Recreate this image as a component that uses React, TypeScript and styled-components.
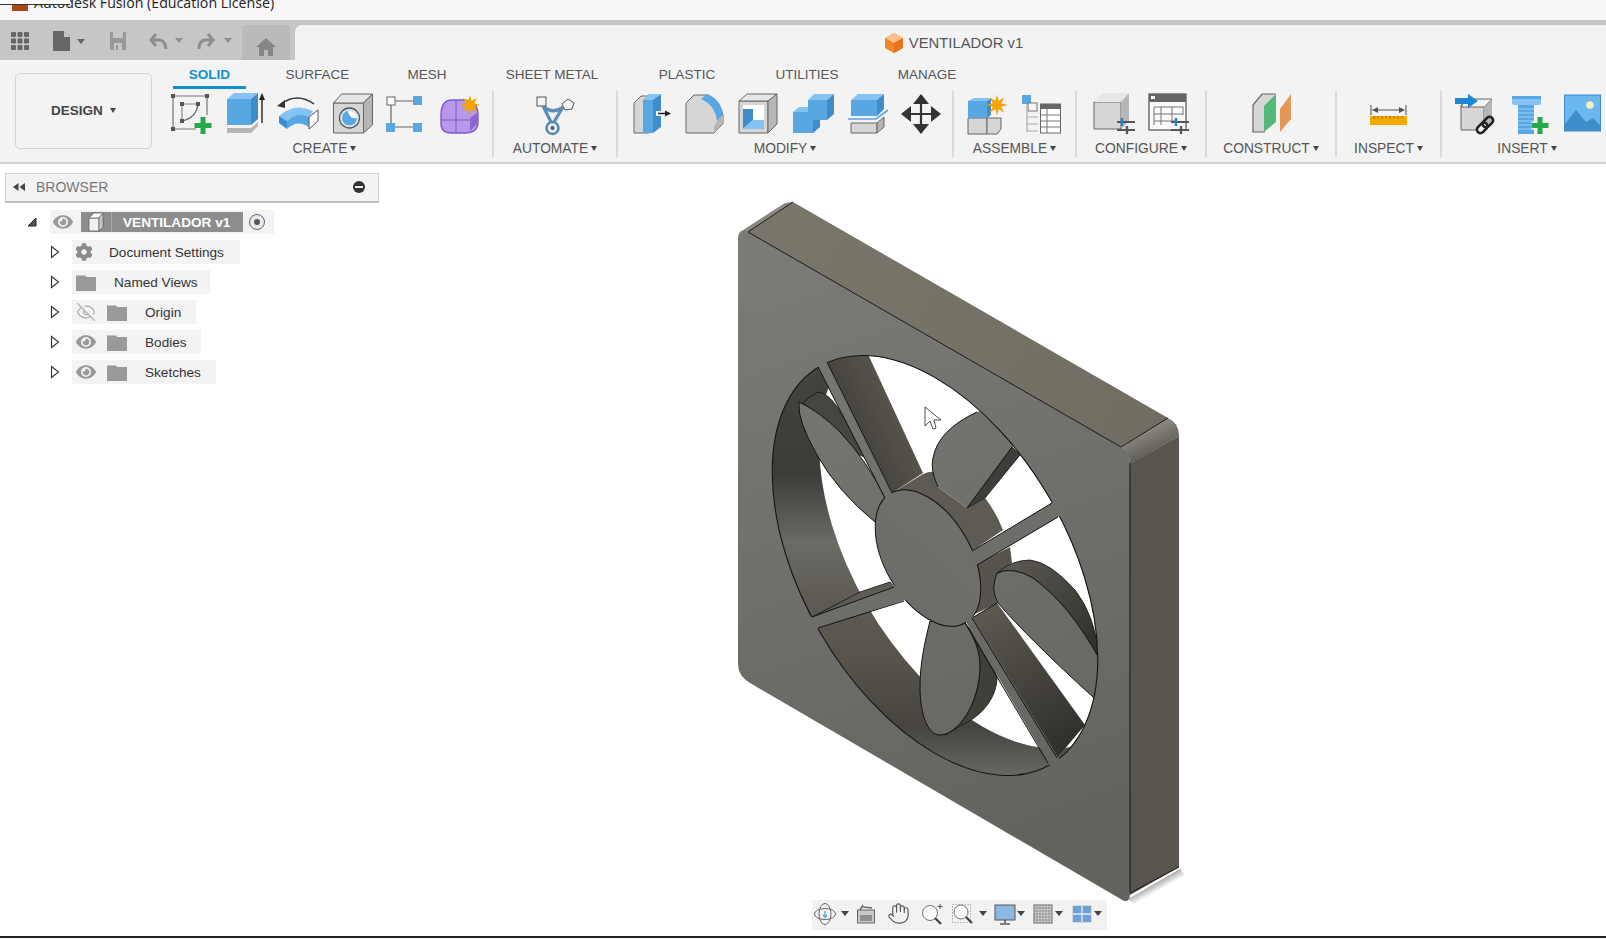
import * as React from "react";
import styled, { createGlobalStyle } from "styled-components";
import { Hand, EyeOff } from "lucide-react";
import { FaCog, FaEye } from "react-icons/fa";

const LIGHT = "#86c3f2";
const BLUE = "#59a7e2";
const DEEP = "#3f8ccb";
const G1 = "#e6e6e6";
const G2 = "#d6d6d6";
const G3 = "#b6b6b6";
const LINE = "#666";

const starPoints = (cx: number, cy: number, r1: number, r2: number, n: number): string => {
  const pts: string[] = [];
  for (let i = 0; i < n * 2; i++) {
    const r = i % 2 ? r2 : r1;
    const a = (Math.PI * i) / n - Math.PI / 2;
    pts.push(`${(cx + r * Math.cos(a)).toFixed(1)},${(cy + r * Math.sin(a)).toFixed(1)}`);
  }
  return pts.join(" ");
};

const Tool: React.FC<{ children: React.ReactNode; dx?: number }> = ({ children, dx = 0 }) => (
  <ToolSvg viewBox="0 0 46 46" fill="none">
    <g transform={`translate(${dx} 0)`}>{children}</g>
  </ToolSvg>
);

const SketchIcon = () => (
  <Tool>
    <path d="M6 5H40M6 5V38M6 38H29M40 5V24" stroke="#777" strokeWidth="1.2" />
    <path d="M15 13H31M15 13V30" stroke="#888" strokeWidth="1.2" />
    <path d="M31 13C30 22 24 28 15 30" stroke="#555" strokeWidth="1.2" />
    {[[6, 5], [40, 5], [6, 38], [15, 13], [31, 13], [15, 30]].map(([x, y]) => (
      <rect key={`${x}-${y}`} x={x - 2} y={y - 2} width="4" height="4" fill="#555" />
    ))}
    <path d="M36 26V43M27.500 34.500H44.500" stroke="#25a84a" strokeWidth="5" />
  </Tool>
);

const ExtrudeIcon = () => (
  <Tool>
    <polygon points="6,8 30,8 30,34 6,34" fill={BLUE} />
    <polygon points="6,8 13,2 37,2 30,8" fill={LIGHT} />
    <polygon points="30,8 37,2 37,28 30,34" fill={DEEP} />
    <polygon points="6,37 30,37 37,31 37,35 30,42 6,42" fill={G3} />
    <path d="M41 32V7" stroke="#222" strokeWidth="1.4" />
    <polygon points="41,2 38,9 44,9" fill="#222" />
  </Tool>
);

const SweepIcon = () => (
  <Tool>
    <path d="M6 13Q22 1 39 13" stroke="#333" strokeWidth="1.5" />
    <polygon points="2,15 10,9 10,17" fill="#333" />
    <path d="M4 25Q20 11 38 20L34 26Q22 20 12 30Z" fill={LIGHT} />
    <path d="M4 25L12 30V38L4 32Z" fill={DEEP} />
    <path d="M12 30Q22 20 34 26V36Q22 28 12 38Z" fill={BLUE} />
    <polygon points="34,26 43,19 43,30 34,38" fill="#fff" stroke="#555" />
  </Tool>
);

const HoleIcon = () => (
  <Tool dx={1.5}>
    <polygon points="3,12 33,12 33,42 3,42" fill={G2} stroke={LINE} />
    <polygon points="3,12 11,3 42,3 33,12" fill={G1} stroke={LINE} />
    <polygon points="33,12 42,3 42,34 33,42" fill={G3} stroke={LINE} />
    <circle cx="19" cy="27" r="10" fill="#dfe8ef" stroke="#555" strokeWidth="1.3" />
    <circle cx="19" cy="27" r="7.500" fill={BLUE} />
    <path d="M17 20A7.500 7.500 0 0 1 26.500 27Q20 29 17 20Z" fill="#fff" />
  </Tool>
);

const BoxNodesIcon = () => (
  <Tool dx={-1}>
    <path d="M13 10H32M9 14V32M13 36H32" stroke="#666" strokeWidth="1.2" />
    <rect x="5" y="6" width="8" height="8" fill="#fff" stroke="#666" />
    <rect x="31" y="5" width="9" height="9" fill={BLUE} />
    <rect x="4" y="32" width="9" height="9" fill={BLUE} />
    <rect x="31" y="32" width="9" height="9" fill={BLUE} />
  </Tool>
);

const FormIcon = () => (
  <Tool>
    <path d="M4 24Q4 9 15 9H28Q41 11 41 24V31Q41 42 28 42H14Q4 42 4 32Z" fill="#b898ec" stroke="#7c5bc2" strokeWidth="1.4" />
    <path d="M4 29H33M19 10V42" stroke="#7c5bc2" strokeWidth="1" />
    <polygon points="33,27 41,21 41,32 33,40" fill="#8a66cf" />
    <polygon points={starPoints(33, 14, 10, 4.5, 8)} fill="#f6a300" />
  </Tool>
);

const AutomateIcon = () => (
  <Tool dx={-2}>
    <path d="M13 15Q23 24 33 16M13 15L21 31M33 16L24 31" stroke="#5b8fb8" strokeWidth="3.2" />
    <rect x="7" y="6" width="9" height="9" fill="#f3f3f3" stroke="#555" />
    <polygon points="38,8 44,12 42,18 35,19 32,13" fill="#f3f3f3" stroke="#555" />
    <circle cx="22.500" cy="37" r="6" fill="#e6eef5" stroke="#4f86ad" strokeWidth="2.4" />
    <circle cx="22.500" cy="37" r="2" fill="#555" />
  </Tool>
);

const PressPullIcon = () => (
  <Tool>
    <path d="M6 42H5V12L12 5H20V42Z" fill={G2} stroke={LINE} />
    <polygon points="14,9 24,9 24,42 14,42" fill={BLUE} />
    <polygon points="14,9 20,3 32,3 24,9" fill={LIGHT} />
    <polygon points="24,9 32,3 32,36 24,42" fill={DEEP} />
    <rect x="27" y="20" width="9" height="5" fill="#f3f3f3" />
    <path d="M29 22.500H38" stroke="#222" strokeWidth="1.5" />
    <polygon points="42,22.500 36,19.500 36,25.500" fill="#222" />
  </Tool>
);

const FilletIcon = () => (
  <Tool dx={-2}>
    <path d="M5 42V12L13 4H28V10Q40 12 42 24V33L33 42Z" fill={G2} stroke={LINE} />
    <path d="M20 8L26 3Q40 8 42 24L36 30Q34 14 20 8Z" fill={BLUE} />
    <polygon points="36,30 42,24 42,33 33,42 33,36" fill={G3} />
  </Tool>
);

const ShellIcon = () => (
  <Tool dx={-2}>
    <polygon points="4,10 33,10 33,42 4,42" fill={G2} stroke={LINE} />
    <polygon points="4,10 12,3 42,3 33,10" fill={G1} stroke={LINE} />
    <polygon points="33,10 42,3 42,33 33,42" fill={G3} stroke={LINE} />
    <rect x="8" y="14" width="21" height="24" fill="#fff" />
    <polygon points="8,18 18,18 18,29 8,38" fill={DEEP} />
    <polygon points="18,29 29,29 29,38 8,38" fill={LIGHT} />
  </Tool>
);

const CombineIcon = () => (
  <Tool dx={-3}>
    <polygon points="20,9 39,9 39,29 20,29" fill={BLUE} />
    <polygon points="20,9 26,3 46,3 39,9" fill={LIGHT} />
    <polygon points="39,9 46,3 46,23 39,29" fill={DEEP} />
    <polygon points="5,21 25,21 25,42 5,42" fill={BLUE} />
    <polygon points="5,21 11,16 20,16 20,21" fill={LIGHT} />
    <polygon points="25,29 32,29 32,36 25,42" fill={DEEP} />
  </Tool>
);

const SplitIcon = () => (
  <Tool>
    <polygon points="6,9 32,9 32,25 6,25" fill={BLUE} />
    <polygon points="6,9 13,3 39,3 32,9" fill={LIGHT} />
    <polygon points="32,9 39,3 39,18 32,25" fill={DEEP} />
    <path d="M3 28H31L43 19" stroke={BLUE} strokeWidth="1.6" />
    <polygon points="6,32 32,32 32,42 6,42" fill={G2} stroke={LINE} />
    <polygon points="32,32 39,26 39,36 32,42" fill={G3} stroke={LINE} />
  </Tool>
);

const MoveIcon = () => (
  <Tool dx={-1}>
    <path d="M23 8V38M8 23H38" stroke="#333" strokeWidth="2.2" />
    <polygon points="23,3 15,13 31,13" fill="#333" />
    <polygon points="23,43 15,33 31,33" fill="#333" />
    <polygon points="3,23 13,15 13,31" fill="#333" />
    <polygon points="43,23 33,15 33,31" fill="#333" />
  </Tool>
);

const NewComponentIcon = () => (
  <Tool dx={-1}>
    <polygon points="5,27 24,27 24,43 5,43" fill={G2} stroke={LINE} />
    <polygon points="24,27 38,27 38,38 34,43 24,43" fill={G2} stroke={LINE} />
    <polygon points="5,10 24,10 24,27 5,27" fill={BLUE} />
    <polygon points="5,10 11,7 27,7 24,10" fill={LIGHT} />
    <polygon points="24,10 28,7 28,24 24,27" fill={DEEP} />
    <polygon points={starPoints(34, 14, 10.5, 4.500, 8)} fill="#f6a300" />
  </Tool>
);

const AssemblyIcon = () => (
  <Tool dx={-1}>
    <rect x="3" y="4" width="9" height="9" fill={BLUE} />
    <rect x="9" y="12" width="9" height="8" fill="#f3f3f3" stroke="#777" />
    <path d="M8 13V41M8 26H19M8 33H19M8 40H19" stroke="#aaa" strokeWidth="1.2" />
    <rect x="21.500" y="13" width="20" height="29" fill="#fff" stroke={LINE} />
    <rect x="21.500" y="13" width="20" height="5" fill={LINE} />
    <path d="M21.500 24H41.500M21.500 30H41.500M21.500 36H41.500M28 18V42" stroke="#777" strokeWidth="1" />
  </Tool>
);

const ConfigCubeIcon = () => (
  <Tool dx={-1}>
    <polygon points="5,11 32,11 32,38 5,38" fill={G2} stroke={LINE} />
    <polygon points="5,11 14,2 40,2 32,11" fill={G1} />
    <polygon points="32,11 40,2 40,30 32,38" fill={G3} />
    <path d="M28 31H46M28 39H46" stroke="#555" strokeWidth="2" />
    <path d="M33 27V35" stroke="#1d86d0" strokeWidth="2.4" />
    <path d="M38 35V43" stroke="#555" strokeWidth="2.4" />
  </Tool>
);

const ConfigTableIcon = () => (
  <Tool dx={-1}>
    <rect x="4" y="3" width="37" height="36" fill="#fafafa" stroke={LINE} strokeWidth="1.4" />
    <rect x="4" y="3" width="37" height="8" fill={LINE} />
    <rect x="6" y="5" width="4" height="3" fill="#fff" />
    <path d="M9 16H38M9 23H38M9 30H30M9 16V34M16 16V34M27 16V30M38 16V24" stroke="#777" strokeWidth="1" />
    <path d="M26 31H44M26 39H44" stroke="#555" strokeWidth="2" />
    <path d="M31 27V35" stroke="#1d86d0" strokeWidth="2.4" />
    <path d="M36 35V43" stroke="#555" strokeWidth="2.4" />
  </Tool>
);

const ConstructIcon = () => (
  <Tool>
    <path d="M15 41H3V14L12 3H26" fill={G2} stroke={LINE} strokeWidth="1.2" />
    <polygon points="14,15 26,3 26,31 14,41" fill="#52b97a" />
    <polygon points="30,18 41,3 41,28 30,41" fill="#e8955a" />
  </Tool>
);

const InspectIcon = () => (
  <Tool dx={-1}>
    <path d="M6 14V24M41 14V24M8 19H39" stroke="#555" strokeWidth="1.1" />
    <polygon points="7,19 13,16 13,22" fill="#555" />
    <polygon points="40,19 34,16 34,22" fill="#555" />
    <rect x="5" y="25" width="37" height="9" fill="#f2a900" />
    <path d="M9 25v3M13 25v2M17 25v3M21 25v2M25 25v3M29 25v2M33 25v3M37 25v2" stroke="#a8641a" strokeWidth="1" />
  </Tool>
);

const DeriveIcon = () => (
  <Tool dx={1}>
    <polygon points="11,14 34,14 34,39 11,39" fill={G2} stroke={LINE} />
    <polygon points="16,8 42,8 34,16 11,16" fill="#f3f3f3" stroke={LINE} />
    <polygon points="34,16 42,8 42,32 34,39" fill={G3} />
    <path d="M5 10H18" stroke="#1d86d0" strokeWidth="6" />
    <polygon points="18,3 28,10 18,17" fill="#1d86d0" />
    <g transform="rotate(-45 35 34)" fill="none" stroke="#222" strokeWidth="2.6">
      <rect x="25" y="30.500" width="12" height="7" rx="3.500" fill="#f3f3f3" />
      <rect x="33" y="30.500" width="12" height="7" rx="3.500" />
    </g>
  </Tool>
);

const BoltIcon = () => (
  <Tool dx={-1}>
    <rect x="9" y="5" width="29" height="9" rx="2" fill={LIGHT} />
    <rect x="9" y="5" width="29" height="3" fill={BLUE} />
    <rect x="15" y="14" width="16" height="29" fill={BLUE} />
    <path d="M15 18H31M15 22H31M15 26H31M15 30H31M15 34H31M15 38H31" stroke={LIGHT} strokeWidth="1.3" />
    <path d="M37 26V43M28.500 34.500H45.500" stroke="#f3f3f3" strokeWidth="8" />
    <path d="M37 26V43M28.500 34.500H45.500" stroke="#25a84a" strokeWidth="5" />
  </Tool>
);

const ImageIcon = () => (
  <Tool>
    <rect x="5.500" y="4" width="36" height="36" fill="#6bb8ef" stroke={DEEP} />
    <circle cx="31" cy="14" r="3.800" fill="#f4eec0" />
    <path d="M6 33L17 19L27 31L34 27L41 34V40H6Z" fill={DEEP} />
  </Tool>
);

type ToolGroup = {
  label: string;
  width: number;
  cell: number;
  shift?: number;
  icons: React.FC[];
};

const groups: ToolGroup[] = [
  { label: "CREATE", width: 335, cell: 54, icons: [SketchIcon, ExtrudeIcon, SweepIcon, HoleIcon, BoxNodesIcon, FormIcon] },
  { label: "AUTOMATE", width: 124, cell: 46, icons: [AutomateIcon] },
  { label: "MODIFY", width: 336, cell: 54, shift: 3, icons: [PressPullIcon, FilletIcon, ShellIcon, CombineIcon, SplitIcon, MoveIcon] },
  { label: "ASSEMBLE", width: 123, cell: 56, icons: [NewComponentIcon, AssemblyIcon] },
  { label: "CONFIGURE", width: 130, cell: 56, icons: [ConfigCubeIcon, ConfigTableIcon] },
  { label: "CONSTRUCT", width: 130, cell: 46, shift: 4, icons: [ConstructIcon] },
  { label: "INSPECT", width: 105, cell: 46, icons: [InspectIcon] },
  { label: "INSERT", width: 172, cell: 55, icons: [DeriveIcon, BoltIcon, ImageIcon] },
];

const tabs = [
  { label: "SOLID", width: 73, active: true },
  { label: "SURFACE", width: 143 },
  { label: "MESH", width: 76 },
  { label: "SHEET METAL", width: 174 },
  { label: "PLASTIC", width: 96 },
  { label: "UTILITIES", width: 144 },
  { label: "MANAGE", width: 96 },
];

const Folder = () => (
  <TreeSvg viewBox="0 0 20 20">
    <path d="M0 3H9L10 5H20V19H0Z" fill="#999" />
    <path d="M0 3H9L9.500 4H0Z" fill="#c4c4c4" />
  </TreeSvg>
);

const Twisty = () => (
  <TwistySvg viewBox="0 0 10 14">
    <path d="M1.500 1.500L8.500 7L1.500 12.500Z" fill="#fff" stroke="#333" strokeWidth="1.1" />
  </TwistySvg>
);

const FanModel = () => (
  <ModelSvg viewBox="700 180 500 730">
    <defs>
      <linearGradient id="face" gradientUnits="userSpaceOnUse" x1="800" y1="260" x2="1000" y2="860">
        <stop offset="0" stopColor="#7a7b77" />
        <stop offset="0.5" stopColor="#6e6f6b" />
        <stop offset="1" stopColor="#63635e" />
      </linearGradient>
      <linearGradient id="top" gradientUnits="userSpaceOnUse" x1="760" y1="210" x2="1150" y2="440">
        <stop offset="0" stopColor="#7b766b" />
        <stop offset="1" stopColor="#726d63" />
      </linearGradient>
      <linearGradient id="round" gradientUnits="userSpaceOnUse" x1="1140" y1="430" x2="1150" y2="452">
        <stop offset="0" stopColor="#8e8c84" />
        <stop offset="1" stopColor="#65625b" />
      </linearGradient>
      <linearGradient id="wall" gradientUnits="userSpaceOnUse" x1="0" y1="370" x2="0" y2="780">
        <stop offset="0" stopColor="#454340" />
        <stop offset="0.25" stopColor="#3d3b38" />
        <stop offset="0.42" stopColor="#6a6b66" />
        <stop offset="0.55" stopColor="#5f5c55" />
        <stop offset="0.7" stopColor="#58544c" />
        <stop offset="0.87" stopColor="#46443e" />
        <stop offset="1" stopColor="#6b6a65" />
      </linearGradient>
      <linearGradient id="bandA" gradientUnits="userSpaceOnUse" x1="840" y1="400" x2="905" y2="370">
        <stop offset="0" stopColor="#45433e" />
        <stop offset="1" stopColor="#615c53" />
      </linearGradient>
      <linearGradient id="bandC" gradientUnits="userSpaceOnUse" x1="985" y1="615" x2="1070" y2="745">
        <stop offset="0" stopColor="#5c5850" />
        <stop offset="1" stopColor="#302f2b" />
      </linearGradient>
      <linearGradient id="bladeSide" gradientUnits="userSpaceOnUse" x1="1000" y1="560" x2="1090" y2="640">
        <stop offset="0" stopColor="#5f5c55" />
        <stop offset="1" stopColor="#33322e" />
      </linearGradient>
      <linearGradient id="floor" gradientUnits="userSpaceOnUse" x1="1155" y1="881" x2="1160" y2="890">
        <stop offset="0" stopColor="#999" />
        <stop offset="1" stopColor="#fff" />
      </linearGradient>
      <clipPath id="hole">
        <ellipse cx="935" cy="565.5" rx="230" ry="133" transform="rotate(60 935 565.5)" />
      </clipPath>
    </defs>

    <polygon points="1128,899 1180,869 1186,876 1136,906" fill="url(#floor)" />
    <path d="M748 232L793 202L1168 418L1121 447Z" fill="url(#top)" />
    <polygon points="740,232 785,203 793,202 748,232" fill="#8a8780" />
    <path d="M1130 465L1179 436V867L1130 895Z" fill="#5a554e" />
    <path d="M1121 447L1168 418Q1179 423 1179 436L1130 465Q1130 452 1121 447Z" fill="url(#round)" />

    <g clipPath="url(#hole)">
      <rect x="760" y="340" width="350" height="450" fill="url(#wall)" />
      <ellipse cx="982" cy="538.5" rx="230" ry="133" transform="rotate(60 982 538.5)" fill="#fff" />

      <polygon points="827,362 867,352 923,473 892,493" fill="url(#bandA)" />
      <polygon points="972,618 997,603 1085,725 1057,758" fill="url(#bandC)" />
      <polygon points="812,617 860,592 890,582 894,587" fill="#5e5c56" stroke="#111" strokeWidth="0.8" />
      <path d="M892 493L923 474Q930 471 935 472L938 487L967 508L985 498Q996 512 1003 530L972 551L930 540Z" fill="#5e5b54" />
      <polygon points="975,565 1010,547 1012,563 997,573 995,597 998,603 973,615 980,593" fill="#57544d" />
      <path d="M972 618L997 603" stroke="#111" />

      <path d="M803 403Q810 396 818 392Q828 393 838 408Q852 430 866 458L860 455Z" fill="#47453f" stroke="#111" strokeWidth="0.8" />
      <path d="M799 402Q820 412 840 432Q868 462 885 498L875 522Q838 492 817 455Q797 420 799 402Z" fill="url(#face)" stroke="#111" />

      <path d="M1012 447L1020 455L985 498L967 508Z" fill="#3f3d39" stroke="#111" strokeWidth="0.8" />
      <path d="M938 487Q930 470 933 458Q938 430 977 412L990 408L1020 445L1012 447L967 508Z" fill="url(#face)" />
      <path d="M938 487Q930 470 933 458Q938 430 977 412M1012 447L967 508" fill="none" stroke="#111" />

      <path d="M997 573Q1012 560 1030 560Q1050 562 1075 590Q1095 615 1100 660L1033 578Q1013 566 997 573Z" fill="url(#bladeSide)" stroke="#111" strokeWidth="0.8" />
      <path d="M997 573Q1013 566 1033 578Q1070 605 1100 660V705L1093 697Q1030 640 998 603Q990 590 997 573Z" fill="url(#face)" stroke="#111" />

      <path d="M964 622C975 635 988 650 997 677C997 695 985 715 960 726L945 735C965 720 980 700 980 665C980 650 972 632 964 622Z" fill="#413f3a" stroke="#111" strokeWidth="0.8" />
      <path d="M930 621C924 645 920 665 920 687C920 715 928 735 940 735C957 735 980 705 980 665C980 650 972 632 964 622Z" fill="url(#face)" stroke="#111" />
    </g>

    <ellipse cx="928" cy="558" rx="74.700" ry="43" transform="rotate(60 928 558)" fill="url(#face)" stroke="#111" />

    <path
      fillRule="evenodd"
      fill="url(#face)"
      d="M748 232L1121 447Q1130 452 1130 463V893Q1130 902 1125 901Q1123 901 1119 898L750 683Q738 676 738 664V238Q739 228 748 232Z
         M820 366.300A230 133 60 1 0 1050 764.700A230 133 60 1 0 820 366.300Z"
    />
    <ellipse cx="935" cy="565.500" rx="230" ry="133" transform="rotate(60 935 565.500)" fill="none" stroke="#111" strokeWidth="1.100" />

    <polygon points="815,361 824,356 895,499 888,504" fill="url(#face)" />
    <path d="M818 367L885 498M827 362L892 493" stroke="#111" />
    <polygon points="967,554 1057,500 1063,514 972,568" fill="url(#face)" />
    <path d="M972 551L1052 503M977 565L1058 517" stroke="#111" />
    <polygon points="899,584 806,619 813,630 908,599" fill="url(#face)" />
    <path d="M894 587L812 617M904 601L818 628" stroke="#111" />
    <polygon points="963,617 970,613 1061,762 1052,769" fill="url(#face)" />
    <path d="M965 623L1048 763M972 618L1057 758" stroke="#111" />

    <path d="M748 232L1121 447M748 232L793 202M1121 447L1168 418M1130 463V893M1130 893L1179 867" stroke="#151515" />
    <path d="M1130 465L1179 437" stroke="#55524c" />

    <path d="M925 407V426L930 421L933 429L936 428L934 420L941 420Z" fill="#fff" stroke="#222" strokeWidth="0.800" />
  </ModelSvg>
);

const App: React.FC = () => (
  <Page>
    <GlobalStyle />
    <TitleBar>
      <TitleCut />
      <AppBadge />
      <TitleText>Autodesk Fusion (Education License)</TitleText>
    </TitleBar>

    <TopStrip>
      <QuickBar>
        <QuickSlot $w={30}>
          <svg width="18" height="18" viewBox="0 0 18 18">
            {[0, 6.5, 13].flatMap((x) =>
              [0, 6.5, 13].map((y) => <rect key={`${x}${y}`} x={x} y={y} width="5" height="5" rx="1" fill="#666" />)
            )}
          </svg>
        </QuickSlot>
        <QuickSlot $w={56}>
          <svg width="56" height="24" viewBox="0 0 56 24">
            <path d="M18 2H29L35 8V22H18Z" fill="#666" />
            <path d="M29 2V8H35" fill="#c6c6c6" />
            <polygon points="42,10 50,10 46,15" fill="#666" />
          </svg>
        </QuickSlot>
        <QuickSlot $w={53}>
          <svg width="18" height="20" viewBox="0 0 18 20">
            <path d="M1 1H17V19H1Z" fill="#999" />
            <rect x="4" y="1" width="10" height="6" fill="#c6c6c6" />
            <rect x="5" y="12" width="8" height="7" fill="#c6c6c6" />
            <rect x="7" y="14" width="2" height="5" fill="#999" />
          </svg>
        </QuickSlot>
        <QuickSlot $w={48}>
          <svg width="48" height="20" viewBox="0 0 48 20">
            <path d="M12 3L7 9L12 15M7 9H16Q21 10 22 18" fill="none" stroke="#8e8e8e" strokeWidth="3" />
            <polygon points="31,7 39,7 35,12" fill="#8e8e8e" />
          </svg>
        </QuickSlot>
        <QuickSlot $w={48}>
          <svg width="48" height="20" viewBox="0 0 48 20">
            <path d="M16 3L21 9L16 15M21 9H13Q7 10 7 18" fill="none" stroke="#8e8e8e" strokeWidth="3" />
            <polygon points="32,7 40,7 36,12" fill="#8e8e8e" />
          </svg>
        </QuickSlot>
        <HomeButton>
          <svg width="20" height="18" viewBox="0 0 20 18">
            <path d="M10 0L20 9H17V18H12V12H8V18H3V9H0Z" fill="#858585" />
          </svg>
        </HomeButton>
      </QuickBar>
      <DocTab>
        <svg width="18" height="20" viewBox="0 0 18 20">
          <polygon points="9,0 18,5 18,15 9,20 0,15 0,5" fill="#f0862a" />
          <polygon points="9,0 18,5 9,10 0,5" fill="#fbc08e" />
          <polygon points="9,10 18,5 18,15 9,20" fill="#e9741b" />
        </svg>
        <DocName>VENTILADOR v1</DocName>
      </DocTab>
    </TopStrip>

    <Ribbon>
      <DesignButton>
        DESIGN
        <Caret $ml={7} />
      </DesignButton>
      <RibbonMain>
        <TabRow>
          {tabs.map((tab) => (
            <RibbonTab key={tab.label} $w={tab.width} $active={tab.active}>
              {tab.label}
            </RibbonTab>
          ))}
        </TabRow>
        <GroupRow>
          {groups.map((group, index) => (
            <Group key={group.label} $w={group.width} $first={index === 0}>
              <ToolRow $shift={group.shift}>
                {group.icons.map((Icon, i) => (
                  <ToolCell key={i} $w={group.cell}>
                    <Icon />
                  </ToolCell>
                ))}
              </ToolRow>
              <GroupLabel>
                {group.label}
                <Caret $ml={3} />
              </GroupLabel>
            </Group>
          ))}
        </GroupRow>
      </RibbonMain>
    </Ribbon>

    <Viewport>
      <FanModel />

      <BrowserHeader>
        <svg width="14" height="8" viewBox="0 0 14 8">
          <path d="M6.500 0V8L1 4ZM13 0V8L7.500 4Z" fill="#444" />
        </svg>
        <BrowserTitle>BROWSER</BrowserTitle>
        <MinusDot />
      </BrowserHeader>

      <Tree>
        <TreeRow $left={27}>
          <RootTwisty viewBox="0 0 10 10">
            <path d="M1 9L9 1V9Z" fill="#555" stroke="#222" strokeWidth="1" />
          </RootTwisty>
          <Chip>
            <EyeSlot>
              <FaEye size={20} color="#999" />
            </EyeSlot>
            <RootLabel>
              <CubeCell>
                <svg width="16" height="20" viewBox="0 0 16 20">
                  <polygon points="1,6 11,6 11,19 1,19" fill="#f0f0f0" stroke="#666" strokeWidth="0.800" />
                  <polygon points="1,6 6,1 15,1 11,6" fill="#fff" stroke="#666" strokeWidth="0.800" />
                  <polygon points="11,6 15,1 15,15 11,19" fill="#c9c9c9" stroke="#666" strokeWidth="0.800" />
                </svg>
              </CubeCell>
              <RootName>VENTILADOR v1</RootName>
            </RootLabel>
            <RadioDot />
          </Chip>
        </TreeRow>

        <TreeRow $left={50}>
          <Twisty />
          <Chip>
            <IconSlot $ml={2}>
              <FaCog size={18} color="#8b8b8b" />
            </IconSlot>
            <RowName $ml={15} $mr={16}>Document Settings</RowName>
          </Chip>
        </TreeRow>

        <TreeRow $left={50}>
          <Twisty />
          <Chip>
            <IconSlot $ml={4}>
              <Folder />
            </IconSlot>
            <RowName $ml={18} $mr={12}>Named Views</RowName>
          </Chip>
        </TreeRow>

        <TreeRow $left={50}>
          <Twisty />
          <Chip>
            <IconSlot $ml={4}>
              <EyeOff size={20} color="#aaa" strokeWidth={1.4} />
            </IconSlot>
            <IconSlot $ml={11}>
              <Folder />
            </IconSlot>
            <RowName $ml={18} $mr={15}>Origin</RowName>
          </Chip>
        </TreeRow>

        <TreeRow $left={50}>
          <Twisty />
          <Chip>
            <IconSlot $ml={4}>
              <FaEye size={20} color="#999" />
            </IconSlot>
            <IconSlot $ml={11}>
              <Folder />
            </IconSlot>
            <RowName $ml={18} $mr={14}>Bodies</RowName>
          </Chip>
        </TreeRow>

        <TreeRow $left={50}>
          <Twisty />
          <Chip>
            <IconSlot $ml={4}>
              <FaEye size={20} color="#999" />
            </IconSlot>
            <IconSlot $ml={11}>
              <Folder />
            </IconSlot>
            <RowName $ml={18} $mr={15}>Sketches</RowName>
          </Chip>
        </TreeRow>
      </Tree>

      <NavBar>
        <NavSlot $ml={1}>
          <svg width="24" height="24" viewBox="0 0 24 24" fill="none" stroke="#666" strokeWidth="1">
            <ellipse cx="12" cy="12" rx="10.500" ry="5.500" />
            <ellipse cx="12" cy="12" rx="6" ry="10.500" />
            <path d="M12 9V15M10 13L12 15.500L14 13" stroke="#1d86d0" />
          </svg>
        </NavSlot>
        <NavCaret $ml={4} />
        <NavSlot $ml={5}>
          <svg width="24" height="24" viewBox="0 0 24 24" fill="none">
            <rect x="3.500" y="8" width="17" height="13" fill="#c9c9c9" stroke="#666" />
            <rect x="6" y="13" width="12" height="6" fill="#8f8f8f" />
            <path d="M6 8L9 3M9 5L18 6" stroke="#666" strokeWidth="1.500" />
          </svg>
        </NavSlot>
        <NavSlot $ml={9}>
          <Hand size={23} color="#555" strokeWidth={1.2} />
        </NavSlot>
        <NavSlot $ml={9}>
          <svg width="24" height="24" viewBox="0 0 24 24" fill="none">
            <circle cx="10" cy="11" r="7.500" fill="#fbfbfb" stroke="#777" />
            <path d="M15 16L21 22" stroke="#444" strokeWidth="2.200" />
            <path d="M20 2V7M17.500 4.500H22.500" stroke="#555" />
          </svg>
        </NavSlot>
        <NavSlot $ml={7}>
          <svg width="24" height="24" viewBox="0 0 24 24" fill="none">
            <rect x="1.500" y="2.500" width="18" height="18" stroke="#aaa" strokeDasharray="1.500 1.500" />
            <circle cx="10" cy="10" r="7" fill="#fbfbfb" stroke="#777" />
            <path d="M15 15L21 21" stroke="#444" strokeWidth="2.200" />
          </svg>
        </NavSlot>
        <NavCaret $ml={4} />
        <NavSlot $ml={6}>
          <svg width="24" height="24" viewBox="0 0 24 24">
            <rect x="2" y="3" width="20" height="15" fill="#8db8e2" stroke="#555" />
            <path d="M12 18V21M7 22H17" stroke="#555" strokeWidth="1.600" />
          </svg>
        </NavSlot>
        <NavCaret $ml={0} />
        <NavSlot $ml={6}>
          <svg width="24" height="24" viewBox="0 0 24 24" fill="none">
            <rect x="3" y="3" width="18" height="18" fill="#d8d8d8" stroke="#666" />
            <path d="M6 3V21M9 3V21M12 3V21M15 3V21M18 3V21M3 6H21M3 9H21M3 12H21M3 15H21M3 18H21" stroke="#888" strokeWidth="0.800" />
          </svg>
        </NavSlot>
        <NavCaret $ml={0} />
        <NavSlot $ml={7}>
          <svg width="24" height="24" viewBox="0 0 24 24">
            <rect x="3" y="4" width="18" height="16" fill="#6f9fd4" stroke="#8aa" strokeWidth="0.600" />
            <path d="M12 4V20M3 12H21" stroke="#e8eef5" strokeWidth="1.300" />
          </svg>
        </NavSlot>
        <NavCaret $ml={0} />
      </NavBar>
    </Viewport>

    <BottomRule />
  </Page>
);

const GlobalStyle = createGlobalStyle`
  html, body {
    margin: 0;
    padding: 0;
    background: #fff;
    overflow: hidden;
  }
`;

const Page = styled.div`
  width: 1606px;
  height: 940px;
  display: flex;
  flex-direction: column;
  overflow: hidden;
  background: #fff;
  font-family: "Liberation Sans", Arial, sans-serif;
`;

const TitleBar = styled.div`
  position: relative;
  height: 20px;
  flex: none;
  display: flex;
  overflow: hidden;
  background: #f8f6f7;
`;

const TitleCut = styled.div`
  position: absolute;
  top: 0;
  left: 0;
  width: 70px;
  height: 4px;
  background: #fff;
  border-bottom: 1px solid #333;
`;

const AppBadge = styled.div`
  width: 16px;
  height: 6px;
  margin: 5px 0 0 12px;
  background: #a8471a;
`;

const TitleText = styled.div`
  margin: -7px 0 0 6px;
  font: 14.2px/20px "Open Sans", sans-serif;
  color: #222;
  white-space: nowrap;
`;

const TopStrip = styled.div`
  height: 40px;
  flex: none;
  display: flex;
  padding-top: 5px;
  box-sizing: border-box;
  background: #c6c6c6;
`;

const QuickBar = styled.div`
  width: 295px;
  flex: none;
  display: flex;
  align-items: stretch;
  padding-left: 5px;
  box-sizing: border-box;
`;

const QuickSlot = styled.div<{ $w: number }>`
  width: ${(p) => p.$w}px;
  display: flex;
  align-items: center;
  justify-content: center;
  margin-top: -4px;
`;

const HomeButton = styled.div`
  width: 48px;
  margin-left: 2px;
  display: flex;
  align-items: center;
  justify-content: center;
  padding-top: 9px;
  box-sizing: border-box;
  background: #bababa;
  border-radius: 4px 4px 0 0;
`;

const DocTab = styled.div`
  flex: 1;
  display: flex;
  align-items: center;
  justify-content: center;
  padding-left: 7px;
  background: #f3f3f3;
  border-radius: 7px 0 0 0;
`;

const DocName = styled.span`
  margin-left: 6px;
  font-size: 14.8px;
  color: #555;
`;

const Ribbon = styled.div`
  height: 104px;
  flex: none;
  display: flex;
  box-sizing: border-box;
  background: #f3f3f3;
  border-bottom: 2px solid #d2d2d2;
`;

const DesignButton = styled.div`
  width: 137px;
  height: 76px;
  flex: none;
  margin: 13px 5px 0 15px;
  padding-bottom: 2px;
  display: flex;
  align-items: center;
  justify-content: center;
  box-sizing: border-box;
  border: 1.5px solid #d4d4d4;
  border-radius: 5px;
  font-size: 13.5px;
  font-weight: 700;
  color: #444;
`;

const RibbonMain = styled.div`
  flex: 1;
  display: flex;
  flex-direction: column;
  min-width: 0;
`;

const TabRow = styled.div`
  height: 29px;
  display: flex;
  padding-left: 16px;
`;

const RibbonTab = styled.div<{ $w: number; $active?: boolean }>`
  width: ${(p) => p.$w}px;
  height: 29px;
  flex: none;
  padding-top: 3px;
  display: flex;
  align-items: center;
  justify-content: center;
  box-sizing: border-box;
  font-size: 13.5px;
  font-weight: ${(p) => (p.$active ? 700 : 400)};
  color: ${(p) => (p.$active ? "#1090d0" : "#555")};
  border-bottom: 3px solid ${(p) => (p.$active ? "#1090d0" : "transparent")};
`;

const GroupRow = styled.div`
  display: flex;
  padding-top: 2px;
`;

const Group = styled.div<{ $w: number; $first?: boolean }>`
  width: ${(p) => p.$w}px;
  height: 66px;
  flex: none;
  display: flex;
  flex-direction: column;
  align-items: center;
  box-sizing: border-box;
  border-left: ${(p) => (p.$first ? "none" : "2px solid #d9d9d9")};
`;

const ToolRow = styled.div<{ $shift?: number }>`
  display: flex;
  height: 46px;
  justify-content: center;
  margin-left: ${(p) => p.$shift ?? 0}px;
`;

const ToolCell = styled.div<{ $w: number }>`
  width: ${(p) => p.$w}px;
  display: flex;
  justify-content: center;
`;

const ToolSvg = styled.svg`
  width: 46px;
  height: 46px;
  flex: none;
  overflow: visible;
`;

const GroupLabel = styled.div`
  margin-top: 3px;
  height: 18px;
  display: flex;
  align-items: center;
  font-size: 13.8px;
  color: #555;
  white-space: nowrap;
`;

const Caret = styled.span<{ $ml: number }>`
  margin-left: ${(p) => p.$ml}px;
  width: 0;
  height: 0;
  border-left: 3.5px solid transparent;
  border-right: 3.5px solid transparent;
  border-top: 5px solid #444;
`;

const Viewport = styled.div`
  position: relative;
  flex: 1;
  min-height: 0;
  padding: 9px 0 0 5px;
`;

const ModelSvg = styled.svg`
  position: absolute;
  left: 700px;
  top: 16px;
  width: 500px;
  height: 730px;
`;

const BrowserHeader = styled.div`
  position: relative;
  width: 374px;
  height: 30px;
  display: flex;
  align-items: center;
  padding: 0 13px 1px 6px;
  box-sizing: border-box;
  background: #f3f3f3;
  border: 1px solid #d2d2d2;
  border-bottom: 2px solid #bdbdbd;
`;

const BrowserTitle = styled.span`
  margin-left: 10px;
  flex: 1;
  font-size: 14px;
  color: #777;
`;

const MinusDot = styled.span`
  width: 12px;
  height: 12px;
  border-radius: 50%;
  background: #333;
  display: flex;
  align-items: center;
  justify-content: center;
  &::after {
    content: "";
    width: 8px;
    height: 2px;
    background: #eee;
  }
`;

const Tree = styled.div`
  position: relative;
  margin: 4px 0 0 -5px;
`;

const TreeRow = styled.div<{ $left: number }>`
  height: 30px;
  display: flex;
  align-items: center;
  padding-left: ${(p) => p.$left}px;
`;

const TwistySvg = styled.svg`
  width: 10px;
  height: 14px;
  margin-right: 12px;
  flex: none;
`;

const RootTwisty = styled.svg`
  width: 10px;
  height: 10px;
  margin-right: 13px;
  flex: none;
`;

const Chip = styled.div`
  height: 24px;
  display: flex;
  align-items: center;
  background: #f3f3f3;
`;

const EyeSlot = styled.div`
  width: 31px;
  padding-right: 5px;
  box-sizing: border-box;
  display: flex;
  justify-content: center;
`;

const RootLabel = styled.div`
  height: 20px;
  display: flex;
  align-items: center;
  background: #8d8d8d;
`;

const CubeCell = styled.div`
  width: 31px;
  height: 20px;
  display: flex;
  align-items: center;
  justify-content: center;
  box-sizing: border-box;
  border-right: 1px solid #a8a8a8;
`;

const RootName = styled.span`
  padding: 0 13px 0 11px;
  font-size: 13.6px;
  font-weight: 700;
  color: #fff;
`;

const RadioDot = styled.span`
  width: 16px;
  height: 16px;
  margin: 0 9px 0 6px;
  box-sizing: border-box;
  border-radius: 50%;
  border: 1px solid #666;
  background: #e8e8f0;
  display: flex;
  align-items: center;
  justify-content: center;
  &::after {
    content: "";
    width: 6px;
    height: 6px;
    border-radius: 50%;
    background: #555;
  }
`;

const IconSlot = styled.div<{ $ml: number }>`
  width: 20px;
  height: 20px;
  margin-left: ${(p) => p.$ml}px;
  display: flex;
  align-items: center;
  justify-content: center;
`;

const TreeSvg = styled.svg`
  width: 20px;
  height: 20px;
`;

const RowName = styled.span<{ $ml: number; $mr: number }>`
  margin: 0 ${(p) => p.$mr}px 0 ${(p) => p.$ml}px;
  font-size: 13.6px;
  color: #333;
  white-space: nowrap;
`;

const NavBar = styled.div`
  position: absolute;
  left: 812px;
  bottom: 6px;
  width: 295px;
  height: 30px;
  display: flex;
  align-items: center;
  background: #f2f2f2;
`;

const NavSlot = styled.div<{ $ml: number }>`
  width: 24px;
  height: 24px;
  flex: none;
  margin-left: ${(p) => p.$ml}px;
  margin-top: -2px;
`;

const NavCaret = styled.span<{ $ml: number }>`
  width: 8px;
  height: 6px;
  flex: none;
  margin-left: ${(p) => p.$ml}px;
  margin-top: -2px;
  box-sizing: border-box;
  border-left: 4px solid transparent;
  border-right: 4px solid transparent;
  border-top: 5px solid #444;
`;

const BottomRule = styled.div`
  height: 2px;
  flex: none;
  margin-bottom: 2px;
  background: #222;
`;

export default App;
